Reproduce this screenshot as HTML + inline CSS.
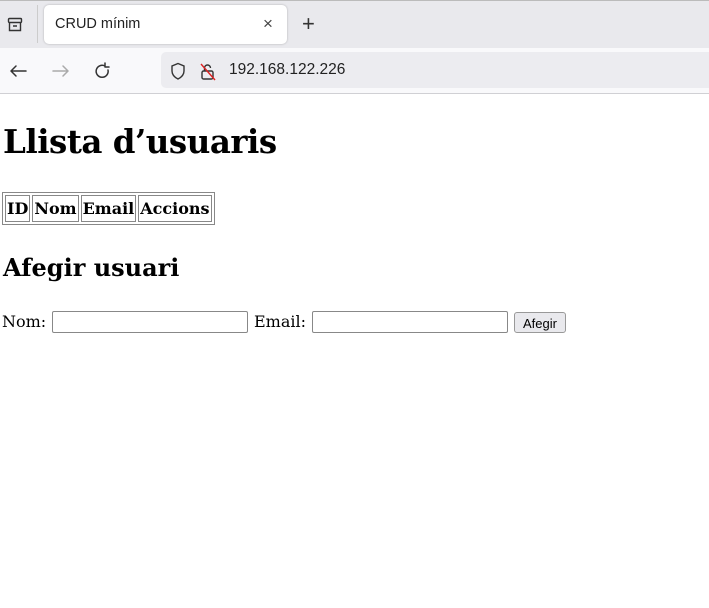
<!DOCTYPE html>
<html><head><style>
body{margin:0;width:709px;height:608px;position:relative;background:#fff;overflow:hidden;font-family:"Liberation Sans",sans-serif}
.abs{position:absolute}
.tabbar{left:0;top:0;width:709px;height:48px;background:#e9e9ed}
.tab{left:44px;top:5px;width:243px;height:39px;background:#fff;border-radius:5px;box-shadow:0 0 2px rgba(0,0,0,.25)}
.nav{left:0;top:48px;width:709px;height:45px;background:#f9f9fb;border-bottom:1px solid #d0d0d4}
.url{left:161px;top:52px;width:560px;height:36px;background:#ececf0;border-radius:5px}
.serif{font-family:"DejaVu Serif","Liberation Serif",serif;color:#000}
table{border:1px solid #888;border-spacing:2px;font-weight:bold;font-size:16px}
td,th{border:1px solid #888;padding:3px 1px}
input{border:1px solid #888;border-radius:2px;height:22px;width:196px;padding:0;box-sizing:border-box}
</style></head><body>
<div class="abs tabbar"></div>
<div class="abs" style="left:0;top:0;width:709px;height:1px;background:#bbb"></div>
<svg class="abs" style="left:7px;top:17px" width="16" height="16" viewBox="0 0 16 16" fill="none" stroke="#333" stroke-width="1.4"><rect x="1.5" y="1.5" width="13" height="4" rx="1"/><path d="M2.5 5.5v8h11v-8M6 9h4"/></svg>
<div class="abs" style="left:37px;top:5px;width:1px;height:38px;background:#ccc"></div>
<div class="abs tab"></div>
<div class="abs" style="left:55px;top:16px;font-size:14.5px;color:#222">CRUD mínim</div>
<div class="abs" style="left:263px;top:14px;font-size:17px;color:#444">×</div>
<div class="abs" style="left:302px;top:11px;font-size:22px;color:#333">+</div>
<div class="abs nav"></div>
<div class="abs url"></div>
<svg class="abs" style="left:8px;top:62px" width="110" height="20" viewBox="0 0 110 20" fill="none" stroke-width="1.5" stroke-linecap="round" stroke-linejoin="round"><path d="M18 9H3M8 4L3 9l5 5" stroke="#333"/><path d="M45 9h15M55 4l5 5-5 5" stroke="#aaa"/><path d="M97 4a6 6 0 1 0 3 4M97 1v4h4" stroke="#333"/></svg>
<svg class="abs" style="left:170px;top:62px" width="50" height="20" viewBox="0 0 50 20" fill="none" stroke-width="1.4"><path d="M8 1.5l6 2.5v5c0 4-3 6.5-6 8-3-1.5-6-4-6-8V4z" stroke="#333"/><rect x="32" y="9" width="11" height="8" rx="1.5" stroke="#333"/><path d="M34.5 9V6a3 3 0 0 1 6 0" stroke="#333"/><path d="M31 2l14 16" stroke="#d22"/></svg>
<div class="abs" style="left:229px;top:61px;font-size:15.5px;color:#222">192.168.122.226</div>
<div class="abs serif" style="left:3px;top:122px;font-size:32.5px;font-weight:bold;letter-spacing:-0.5px">Llista d’usuaris</div>
<table class="abs serif" style="left:2px;top:192px"><tr><th>ID</th><th>Nom</th><th>Email</th><th>Accions</th></tr></table>
<div class="abs serif" style="left:3px;top:253px;font-size:24px;font-weight:bold">Afegir usuari</div>
<div class="abs serif" style="left:2px;top:312px;font-size:16px">Nom:</div>
<input class="abs" style="left:52px;top:311px">
<div class="abs serif" style="left:254px;top:312px;font-size:16px">Email:</div>
<input class="abs" style="left:312px;top:311px">
<div class="abs" style="left:514px;top:312px;width:52px;height:21px;border:1px solid #999;border-radius:3px;background:#e9e9ed;font-size:13px;text-align:center;line-height:21px;box-sizing:border-box;color:#000">Afegir</div>
</body></html>
